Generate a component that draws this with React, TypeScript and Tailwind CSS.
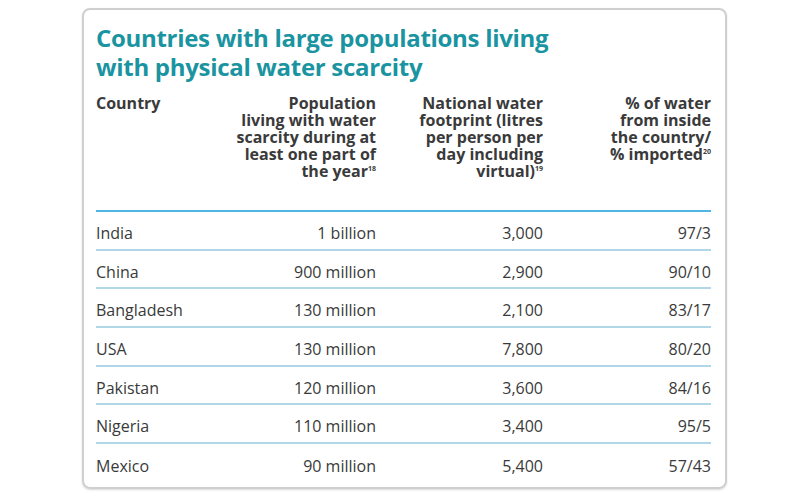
import React from "react";

const rows = [
  ["India", "1 billion", "3,000", "97/3"],
  ["China", "900 million", "2,900", "90/10"],
  ["Bangladesh", "130 million", "2,100", "83/17"],
  ["USA", "130 million", "7,800", "80/20"],
  ["Pakistan", "120 million", "3,600", "84/16"],
  ["Nigeria", "110 million", "3,400", "95/5"],
  ["Mexico", "90 million", "5,400", "57/43"],
];

function Sup({ n }: { n: string }) {
  return <span className="relative -top-[6px] text-[7px] leading-none font-bold">{n}</span>;
}

export default function App() {
  return (
    <div
      className="w-[810px] h-[500px] bg-white pt-[8px] pl-[82px]"
      style={{ fontFamily: '"Open Sans", "Noto Sans", sans-serif' }}
    >
      <div className="w-[645px] h-[481px] rounded-[8px] border-2 border-[#cfcfcf] shadow-[0_1px_2px_rgba(0,0,0,0.15)] pl-[12px] pt-[13px]">
        <h1 className="text-[24px] leading-[29px] font-bold tracking-[-0.3px] text-[#1a94a1]">
          Countries with large populations living
          <br />
          with physical water scarcity
        </h1>

        <div className="mt-[14px] w-[615px] text-[16px] leading-[17px] text-[#3a3a3a]">
          <div className="grid grid-cols-[130px_150px_167px_168px] font-bold h-[117px] border-b-2 border-[#4fb6e2]">
            <div>Country</div>
            <div className="text-right">
              Population
              <br />
              living with water
              <br />
              scarcity during at
              <br />
              least one part of
              <br />
              the year<Sup n="18" />
            </div>
            <div className="text-right">
              National water
              <br />
              footprint (litres
              <br />
              per person per
              <br />
              day including
              <br />
              virtual)<Sup n="19" />
            </div>
            <div className="text-right">
              % of water
              <br />
              from inside
              <br />
              the country/
              <br />% imported<Sup n="20" />
            </div>
          </div>

          {rows.map((r, i) => (
            <div
              key={r[0]}
              className={
                "grid grid-cols-[130px_150px_167px_168px] h-[38.7px] items-center pt-[6px] " +
                (i < rows.length - 1 ? "border-b-2 border-[#b0d6e8]" : "")
              }
            >
              <div>{r[0]}</div>
              <div className="text-right">{r[1]}</div>
              <div className="text-right">{r[2]}</div>
              <div className="text-right">{r[3]}</div>
            </div>
          ))}
        </div>
      </div>
    </div>
  );
}
